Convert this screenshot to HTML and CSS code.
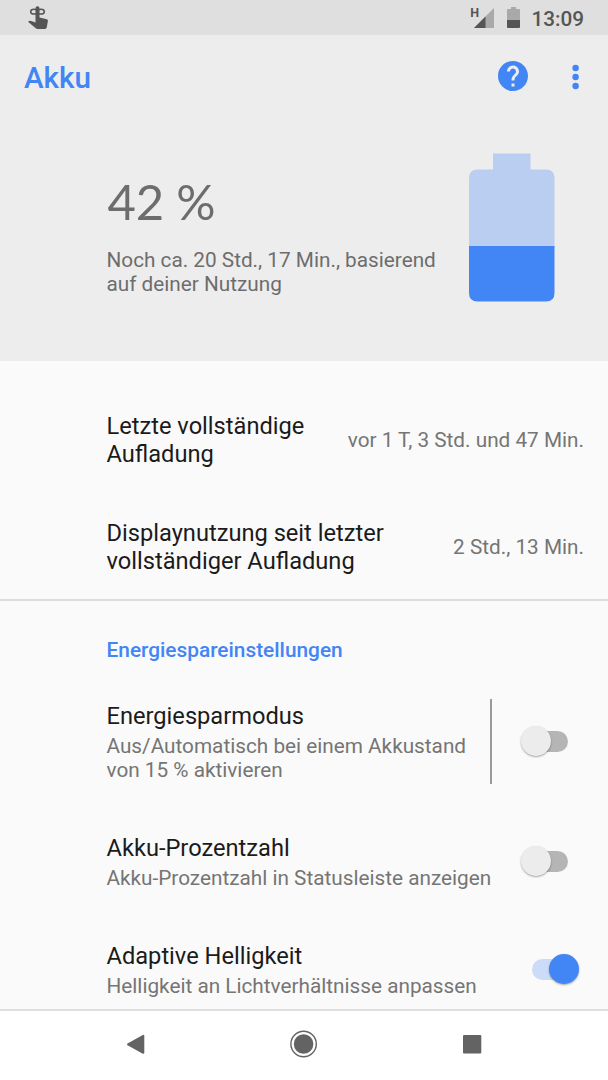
FILE: index.html
```html
<!DOCTYPE html>
<html lang="de">
  <head>
    <title>Akku</title>
    <meta charset="UTF-8">
    <link rel="stylesheet" href="styles.css">
  </head>
  <body>
    <div class="statusbar">
      <svg class="touch-icon" width="22" height="24" viewBox="0 0 22 24">
        <path fill="#555" d="M7.500 2.200a2 2 0 0 1 4 0v9.300l7.300 1.700q1.200.4 1.100 1.800l-1.100 6.300q-.3 1.700-1.800 1.700H9.500q-1 0-1.700-.8L.6 16.300q-.7-.8.4-1.300 1-.4 2.200 0L7.500 16.500z"/>
        <ellipse cx="6" cy="5.700" rx="3.300" ry="2.400" fill="none" stroke="#555" stroke-width="1.500"/>
        <ellipse cx="13" cy="5.700" rx="3.300" ry="2.400" fill="none" stroke="#555" stroke-width="1.500"/>
      </svg>
      <div class="status-right">
        <span class="network">H</span>
        <svg class="signal" width="20" height="20" viewBox="0 0 20 20">
          <path fill="#a9a9a9" d="M20 0v20H0z"/>
          <path fill="#555" d="M11.500 8.500V20H0z"/>
        </svg>
        <svg class="mini-battery" width="13" height="21" viewBox="0 0 13 21">
          <path fill="#a9a9a9" d="M4 0h5v2h3q1 0 1 1v11H0V3q0-1 1-1h3z"/>
          <path fill="#555" d="M0 13h13v7q0 1-1 1H1q-1 0-1-1z"/>
        </svg>
        <span class="clock">13:09</span>
      </div>
    </div>

    <div class="header">
      <div class="appbar">
        <h1>Akku</h1>
        <svg class="help" width="30" height="30" viewBox="2 2 20 20">
          <path fill="#4285f4" d="M12 2C6.480 2 2 6.480 2 12s4.480 10 10 10 10-4.480 10-10S17.520 2 12 2zm1 17h-2v-2h2v2zm2.070-7.750l-.9.920C13.450 12.900 13 13.500 13 15h-2v-.5c0-1.100.450-2.100 1.170-2.830l1.240-1.260c.370-.360.590-.860.590-1.410 0-1.100-.9-2-2-2s-2 .9-2 2H8c0-2.210 1.790-4 4-4s4 1.790 4 4c0 .880-.360 1.680-.930 2.250z"/>
        </svg>
        <svg class="more" width="8" height="26" viewBox="0 0 8 26" fill="#4285f4">
          <circle cx="3.600" cy="4" r="3.200"/>
          <circle cx="3.600" cy="13" r="3.200"/>
          <circle cx="3.600" cy="22" r="3.200"/>
        </svg>
      </div>
      <div class="battery">
        <div class="battery-text">
          <div class="percent">42&nbsp;%</div>
          <div class="estimate">Noch ca. 20 Std., 17 Min., basierend<br>auf deiner Nutzung</div>
        </div>
        <svg class="battery-icon" width="86" height="149" viewBox="0 0 86 149">
          <path fill="#b9cef0" d="M24 0.500h37.500v16H77q8.500 0 8.500 8.500v69H0V25q0-8.500 8.500-8.500H24z"/>
          <path fill="#4285f4" d="M0 93h85.500v47q0 8.500-8.500 8.500H8.500Q0 148.500 0 140z"/>
        </svg>
      </div>
    </div>

    <div class="list">
      <div class="row">
        <div class="title">Letzte vollständige<br>Aufladung</div>
        <div class="value">vor 1 T, 3 Std. und 47 Min.</div>
      </div>
      <div class="row">
        <div class="title">Displaynutzung seit letzter<br>vollständiger Aufladung</div>
        <div class="value">2 Std., 13 Min.</div>
      </div>
      <div class="category">Energiespareinstellungen</div>
      <div class="row setting tall">
        <div class="text">
          <div class="title">Energiesparmodus</div>
          <div class="summary">Aus/Automatisch bei einem Akkustand<br>von 15 % aktivieren</div>
        </div>
        <div class="separator"></div>
        <div class="switch"><div class="thumb"></div></div>
      </div>
      <div class="row setting">
        <div class="text">
          <div class="title">Akku-Prozentzahl</div>
          <div class="summary">Akku-Prozentzahl in Statusleiste anzeigen</div>
        </div>
        <div class="switch"><div class="thumb"></div></div>
      </div>
      <div class="row setting">
        <div class="text">
          <div class="title">Adaptive Helligkeit</div>
          <div class="summary">Helligkeit an Lichtverhältnisse anpassen</div>
        </div>
        <div class="switch on"><div class="thumb"></div></div>
      </div>
    </div>

    <div class="navbar">
      <svg width="28" height="28" viewBox="0 0 28 28">
        <path fill="#636363" stroke="#636363" stroke-width="2" stroke-linejoin="round" d="M22.300 5.800v17L7 14.300z"/>
      </svg>
      <svg width="28" height="28" viewBox="0 0 28 28">
        <circle cx="13.600" cy="14" r="12.700" fill="none" stroke="#636363" stroke-width="1.400"/>
        <circle cx="13.600" cy="14" r="9.800" fill="#636363"/>
      </svg>
      <svg width="28" height="28" viewBox="0 0 28 28">
        <rect x="5" y="5" width="18.300" height="18.500" rx="1" fill="#636363"/>
      </svg>
    </div>
  </body>
</html>
```

FILE: styles.css
```css
* {
	box-sizing: border-box;
}

body {
	margin: 0;
	width: 608px;
	height: 1080px;
	display: flex;
	flex-direction: column;
	overflow: hidden;
	background: #fafafa;
	font-family: Roboto, sans-serif;
	font-size: 20.760px;
	line-height: 24.300px;
	color: #6d6d6d;
}

svg {
	display: block;
	flex: none;
}

.statusbar {
	flex: none;
	height: 35px;
	display: flex;
	justify-content: space-between;
	padding: 0 24px 0 28px;
	background: #dfdfdf;
	color: #555;
}

.touch-icon {
	margin-top: 6px;
}

.status-right {
	display: flex;
}

.network {
	font-size: 12.500px;
	font-weight: 700;
	line-height: 14px;
	margin-top: 6px;
	margin-right: -5px;
}

.signal {
	margin-top: 8px;
}

.mini-battery {
	margin: 7px 11.500px 0 13px;
}

.clock {
	font-size: 20.700px;
	font-weight: 500;
	line-height: 38px;
}

.header {
	flex: none;
	height: 326px;
	background: #ededed;
}

.appbar {
	display: flex;
	align-items: center;
	height: 83px;
	padding: 0 28px 0 24px;
}

.appbar h1 {
	flex: 1;
	margin: 4px 0 0;
	font-size: 29.600px;
	font-weight: 500;
	color: #4285f4;
}

.help {
	margin-bottom: 1px;
}

.more {
	margin-left: 44px;
}

.battery {
	display: flex;
	justify-content: space-between;
	padding: 35px 53px 0 106.500px;
}

.percent {
	margin-top: 18px;
	padding-left: 1px;
	font-family: Lato, sans-serif;
	font-size: 49px;
	line-height: 60px;
	letter-spacing: -.200px;
}

.estimate {
	margin-top: 17px;
	white-space: nowrap;
}

.list {
	flex: 1;
	min-height: 0;
	overflow: hidden;
	padding-top: 25px;
}

.row {
	display: flex;
	align-items: center;
	height: 107px;
	padding: 0 24px 0 106.500px;
}

.row.setting {
	height: 108px;
	padding-right: 40px;
}

.row.setting.tall {
	height: 128px;
	margin-bottom: 2px;
}

.title {
	flex: 1;
	padding-top: 2px;
	font-size: 23.650px;
	line-height: 27.700px;
	color: #1b1b1b;
	white-space: nowrap;
}

.value {
	padding-top: 2px;
	color: #757575;
}

.text {
	flex: 1;
	width: 0;
	padding-top: 1px;
}

.summary {
	margin-top: 3px;
	color: #757575;
	white-space: nowrap;
}

.category {
	height: 78px;
	margin-top: -1px;
	padding: 37px 0 0 106.500px;
	border-top: 2px solid #dcdcdc;
	font-size: 20.850px;
	font-weight: 500;
	color: #4285f4;
}

.separator {
	width: 2px;
	height: 85px;
	margin-right: 39px;
	background: #9a9a9a;
}

/* switches */
.switch {
	display: flex;
	align-items: center;
	width: 37px;
	height: 21px;
	border-radius: 11px;
	background: #b5b5b5;
}

.thumb {
	flex: none;
	width: 30px;
	height: 30px;
	margin-left: -10.500px;
	border-radius: 50%;
	background: #ececec;
	box-shadow: 0 1px 2px rgba(0, 0, 0, .35);
}

.switch.on {
	margin-right: -1px;
	background: #cbdbf8;
}

.switch.on .thumb {
	margin-left: 17px;
	background: #4285f4;
}

.navbar {
	flex: none;
	display: flex;
	justify-content: space-between;
	align-items: center;
	height: 71px;
	padding: 0 122px 4px 121px;
	border-top: 2px solid #dedede;
	background: #fff;
}
```
